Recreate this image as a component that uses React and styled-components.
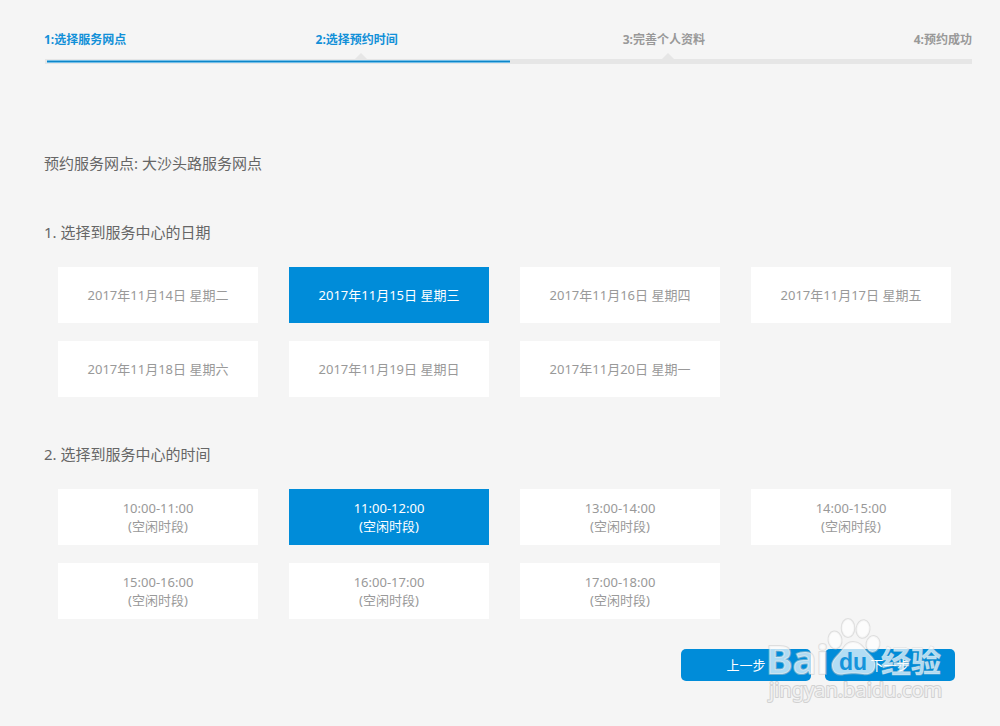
import React, { useState } from "react";
import styled, { createGlobalStyle } from "styled-components";

const GlobalStyle = createGlobalStyle`
  * { box-sizing: border-box; }
  body {
    margin: 0;
    background: #f5f5f5;
    color: #666;
    font-family: "Noto Sans", "Noto Sans CJK SC", sans-serif;
  }
  button { font-family: inherit; cursor: pointer; }
`;

const Page = styled.main`
  padding: 30px 28px 44px 44px;
`;

const Steps = styled.ol`
  display: grid;
  grid-template-columns: 26fr 49fr 49fr 24fr;
  margin: 0;
  padding: 0;
  list-style: none;
`;

const Step = styled.li`
  display: flex;
  flex-direction: column;
  align-items: ${(p) => p.$align || "center"};
  height: 29px;
  font-size: 12px;
  line-height: 20px;
  font-weight: 700;
  white-space: nowrap;
  color: ${(p) => (p.$done ? "#1290d8" : "#999")};
`;

const StepLabel = styled.span`
  padding-right: ${(p) => (p.$middle ? "8px" : "0")};
`;

const Arrow = styled.i`
  margin-top: 3px;
  border: 6px solid transparent;
  border-top: 0;
  border-bottom-color: #e6e6e6;
`;

const Track = styled.div`
  height: 5px;
  margin-left: 1px;
  padding: 1px 0 1px 2px;
  background: #e6e6e6;
`;

const TrackFill = styled.div`
  width: 50%;
  height: 3px;
  background: #0d85c8;
  border: solid #74bfe8;
  border-width: 1px 0;
`;

const Branch = styled.p`
  margin: 89px 0 0;
  font-size: 15px;
  line-height: 20px;
`;

const Section = styled.section`
  margin-top: ${(p) => (p.$first ? "49px" : "47px")};
`;

const Heading = styled.h2`
  margin: 0 0 25px;
  font-size: 15px;
  line-height: 20px;
  font-weight: 400;
`;

const Options = styled.div`
  display: grid;
  grid-template-columns: repeat(4, minmax(0, 1fr));
  gap: 18px 31px;
  padding: 0 21px 0 14px;
`;

const Option = styled.button`
  min-height: 56px;
  padding: 0;
  border: 0;
  font-size: 13px;
  line-height: 18px;
  color: ${(p) => (p.$selected ? "#fff" : "#999")};
  background: ${(p) => (p.$selected ? "#008cd9" : "#fff")};
`;

const Line = styled.span`
  display: block;
`;

const Actions = styled.footer`
  position: relative;
  display: flex;
  justify-content: flex-end;
  gap: 14px;
  margin-top: 30px;
  padding-right: 17px;
`;

const Action = styled.button`
  width: 130px;
  height: 32px;
  padding: 0;
  border: 0;
  border-radius: 5px;
  background: #008cd9;
  color: #fff;
  font-size: 13px;
  line-height: 18px;
`;

const Watermark = styled.svg`
  position: absolute;
  right: 22px;
  top: -34px;
  pointer-events: none;
`;

const dates = [
  "2017年11月14日 星期二",
  "2017年11月15日 星期三",
  "2017年11月16日 星期四",
  "2017年11月17日 星期五",
  "2017年11月18日 星期六",
  "2017年11月19日 星期日",
  "2017年11月20日 星期一",
];

const times = [
  "10:00-11:00",
  "11:00-12:00",
  "13:00-14:00",
  "14:00-15:00",
  "15:00-16:00",
  "16:00-17:00",
  "17:00-18:00",
];

function BaiduMark() {
  return (
    <Watermark width="184" height="94" viewBox="0 0 184 94" aria-hidden="true">
      <g
        fill="#fff"
        fillOpacity="0.7"
        stroke="#c8c8c8"
        strokeOpacity="0.5"
        strokeWidth="2"
        strokeLinejoin="round"
        paintOrder="stroke"
      >
        <ellipse cx="69" cy="25" rx="6.5" ry="8.5" transform="rotate(-8 69 25)" />
        <ellipse cx="82" cy="13" rx="6.3" ry="9" />
        <ellipse cx="97" cy="14" rx="6.5" ry="8.8" transform="rotate(8 97 14)" />
        <ellipse cx="107" cy="29" rx="6.5" ry="8" transform="rotate(12 107 29)" />
        <path d="M87 27 C94 27 97 32 101 37 C106 42 110 45 109 52 C108 58 103 60 97 59 C90 58 85 58 78 59 C71 61 66 57 66 50 C66 44 72 41 76 35 C79 31 81 27 87 27 Z" />
        <text x="0" y="59" fontFamily="Noto Sans, sans-serif" fontWeight="700" fontSize="40">Bai</text>
        <text x="115" y="57" fontFamily="Noto Sans CJK SC, sans-serif" fontWeight="700" fontSize="30" strokeWidth="1">经验</text>
        <text x="3" y="82" fontFamily="Noto Sans, sans-serif" fontSize="20" strokeOpacity="0.8">jingyan.baidu.com</text>
      </g>
      <text x="73" y="55" fill="#1694db" fontFamily="Liberation Sans, sans-serif" fontWeight="700" fontSize="23">du</text>
    </Watermark>
  );
}

export default function App() {
  const [date, setDate] = useState(1);
  const [time, setTime] = useState(1);

  return (
    <>
      <GlobalStyle />
      <Page>
        <Steps>
          <Step $done $align="flex-start"><StepLabel>1:选择服务网点</StepLabel></Step>
          <Step $done aria-current="step"><StepLabel $middle>2:选择预约时间</StepLabel><Arrow /></Step>
          <Step><StepLabel $middle>3:完善个人资料</StepLabel><Arrow /></Step>
          <Step $align="flex-end"><StepLabel>4:预约成功</StepLabel></Step>
        </Steps>
        <Track><TrackFill /></Track>

        <Branch>预约服务网点: 大沙头路服务网点</Branch>

        <Section $first>
          <Heading>1. 选择到服务中心的日期</Heading>
          <Options>
            {dates.map((label, i) => (
              <Option key={label} type="button" $selected={i === date} aria-pressed={i === date} onClick={() => setDate(i)}>
                {label}
              </Option>
            ))}
          </Options>
        </Section>

        <Section>
          <Heading>2. 选择到服务中心的时间</Heading>
          <Options>
            {times.map((label, i) => (
              <Option key={label} type="button" $selected={i === time} aria-pressed={i === time} onClick={() => setTime(i)}>
                <Line>{label}</Line>
                <Line>(空闲时段)</Line>
              </Option>
            ))}
          </Options>
        </Section>

        <Actions>
          <Action type="button">上一步</Action>
          <Action type="button">下一步</Action>
          <BaiduMark />
        </Actions>
      </Page>
    </>
  );
}
